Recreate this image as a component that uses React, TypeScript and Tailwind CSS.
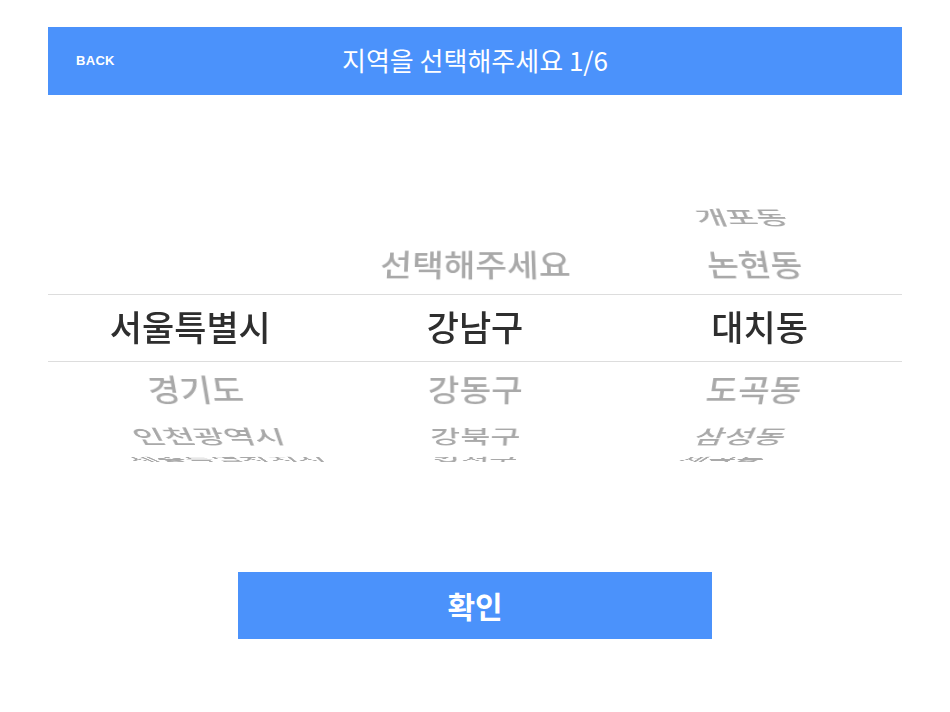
import React from "react";

const R = 163;
const STEP = 23;

const columns: { items: string[]; selected: number }[] = [
  { items: ["서울특별시", "경기도", "인천광역시", "세종특별자치시", "부산광역시"], selected: 0 },
  { items: ["선택해주세요", "강남구", "강동구", "강북구", "강서구"], selected: 1 },
  { items: ["개포동", "논현동", "대치동", "도곡동", "삼성동", "세곡동"], selected: 2 },
];

function Wheel({ items, selected }: { items: string[]; selected: number }) {
  return (
    <div className="relative h-full transform-3d">
      {items.map((t, i) => {
        const k = i - selected;
        if (Math.abs(k * STEP) >= 90) return null;
        const isSel = k === 0;
        return (
          <div
            key={t}
            className={
              "absolute left-0 right-0 top-[109px] h-[48px] leading-[48px] text-center text-[35px] font-medium whitespace-nowrap backface-hidden " +
              (isSel ? "text-[#2e2e2e]" : "text-[#a9a9a9]")
            }
            style={{ transform: `translateZ(-${R}px) rotateX(${-k * STEP}deg) translateZ(${R}px)` }}
          >
            {t}
          </div>
        );
      })}
    </div>
  );
}

export default function App() {
  return (
    <div className="min-h-[712px] w-full bg-white pt-[27px] px-[48px] font-['Noto_Sans_CJK_KR','Noto_Sans',sans-serif] flex flex-col">
      <div className="h-[68px] bg-[#4b92fb] grid grid-cols-[1fr_auto_1fr] items-center text-white">
        <div className="pl-[28px] text-[13px] font-bold font-['Liberation_Sans',sans-serif] tracking-[0.3px]">BACK</div>
        <div className="text-[26px] font-normal leading-none -mt-[2px]">지역을 선택해주세요 1/6</div>
        <div />
      </div>

      <div className="relative mt-[98px] h-[270px] overflow-hidden perspective-[716px] grid grid-cols-3">
        <div className="absolute inset-x-0 top-[101px] h-[68px] border-y border-[#dddddd]" />
        {columns.map((c, i) => (
          <Wheel key={i} items={c.items} selected={c.selected} />
        ))}
      </div>

      <button className="mt-[109px] mx-auto w-[474px] h-[67px] bg-[#4b92fb] text-white text-[30px] font-bold">
        확인
      </button>
    </div>
  );
}
